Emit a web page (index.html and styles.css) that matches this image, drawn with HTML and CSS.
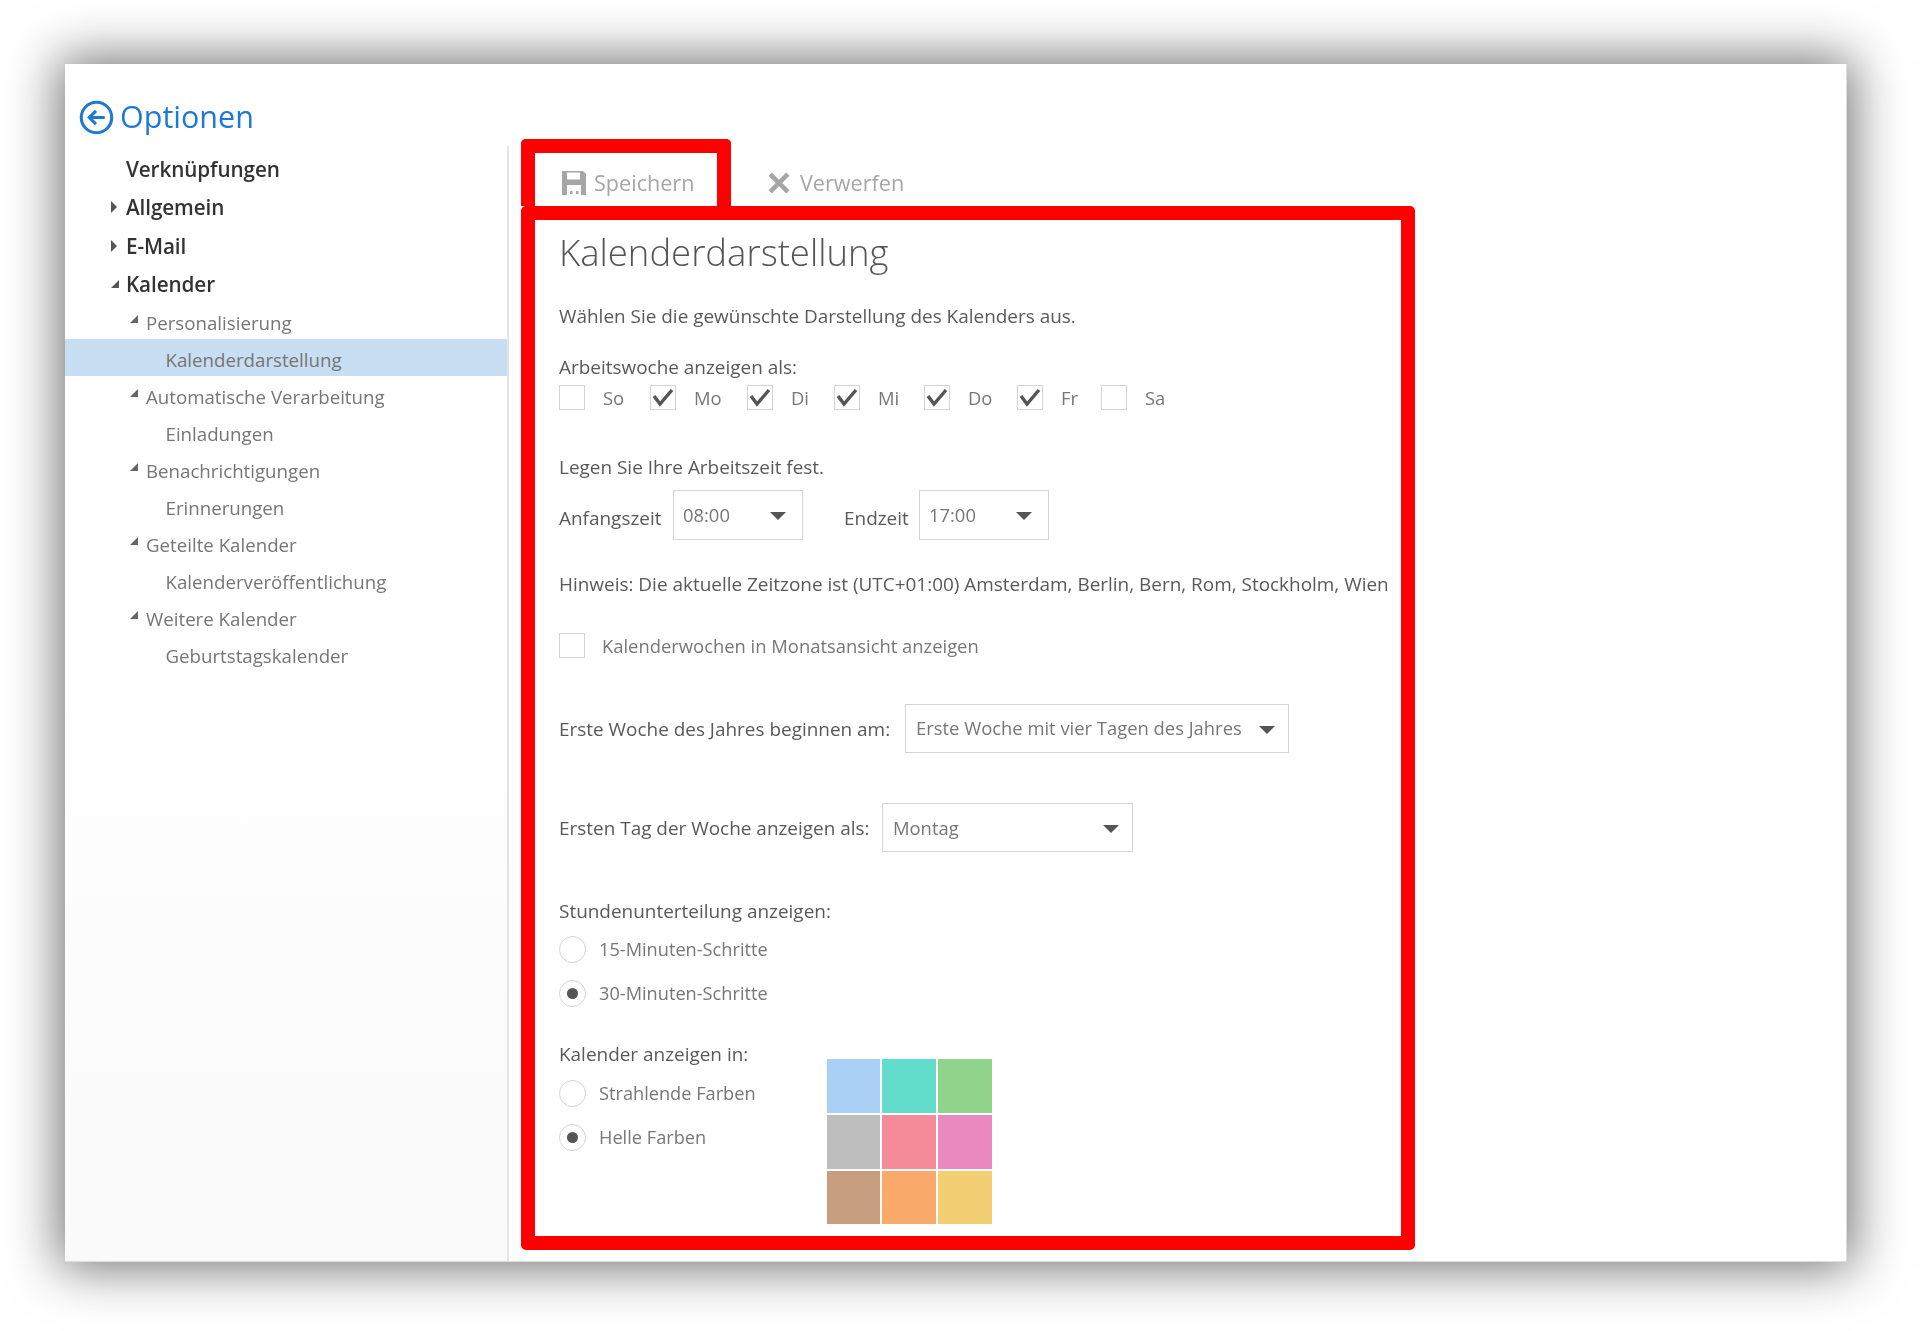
FILE: index.html
```html
<!DOCTYPE html>
<html lang="de">
<head>
<meta charset="utf-8">
<title>Optionen – Kalenderdarstellung</title>
<link rel="stylesheet" href="styles.css">
</head>
<body>
<div class="window">
  <aside class="side">
    <header class="side-head">
      <svg class="back" viewBox="0 0 34 34"><circle cx="17" cy="17" r="14.8" fill="none" stroke="#1f78d6" stroke-width="3"/><path d="M25 17H10M16.5 10.5L10 17l6.500 6.500" fill="none" stroke="#1f78d6" stroke-width="3"/></svg>
      <span class="side-title">Optionen</span>
    </header>
    <nav class="tree">
      <div class="l1">Verknüpfungen</div>
      <div class="l1"><svg class="tw" viewBox="0 0 10 14"><path d="M2 1l6 6-6 6z"/></svg>Allgemein</div>
      <div class="l1"><svg class="tw" viewBox="0 0 10 14"><path d="M2 1l6 6-6 6z"/></svg>E-Mail</div>
      <div class="l1"><svg class="tw tw-open" viewBox="0 0 10 14"><path d="M9 3v8H1z"/></svg>Kalender</div>
      <div class="l2"><svg class="tw" viewBox="0 0 10 14"><path d="M9 3v8H1z"/></svg>Personalisierung</div>
      <div class="l3 sel">Kalenderdarstellung</div>
      <div class="l2"><svg class="tw" viewBox="0 0 10 14"><path d="M9 3v8H1z"/></svg>Automatische Verarbeitung</div>
      <div class="l3">Einladungen</div>
      <div class="l2"><svg class="tw" viewBox="0 0 10 14"><path d="M9 3v8H1z"/></svg>Benachrichtigungen</div>
      <div class="l3">Erinnerungen</div>
      <div class="l2"><svg class="tw" viewBox="0 0 10 14"><path d="M9 3v8H1z"/></svg>Geteilte Kalender</div>
      <div class="l3">Kalenderveröffentlichung</div>
      <div class="l2"><svg class="tw" viewBox="0 0 10 14"><path d="M9 3v8H1z"/></svg>Weitere Kalender</div>
      <div class="l3">Geburtstagskalender</div>
    </nav>
  </aside>
  <main class="main">
    <div class="toolbar">
      <div class="tab">
        <svg class="ico-save" viewBox="0 0 24 24"><path fill-rule="evenodd" d="M0 0h21l3 3v21H0zM5 1.500v7h13v-7zM5 14v10h14V14zM8 20h2.500v3H8zM14 20h2.500v3H14z"/></svg>
        <span>Speichern</span>
      </div>
      <div class="discard">
        <svg class="ico-x" viewBox="0 0 20 20"><path d="M2 2l16 16M18 2L2 18" fill="none" stroke="#a6a6a6" stroke-width="4.200"/></svg>
        <span>Verwerfen</span>
      </div>
    </div>
    <section class="panel">
      <h1 class="title">Kalenderdarstellung</h1>
      <p class="line intro">Wählen Sie die gewünschte Darstellung des Kalenders aus.</p>
      <p class="line week-head">Arbeitswoche anzeigen als:</p>
      <div class="week">
        <div class="day"><span class="cb"></span><span>So</span></div>
        <div class="day"><span class="cb"><svg viewBox="0 0 24 23"><path d="M3 10l6 8 12-14"/></svg></span><span>Mo</span></div>
        <div class="day"><span class="cb"><svg viewBox="0 0 24 23"><path d="M3 10l6 8 12-14"/></svg></span><span>Di</span></div>
        <div class="day"><span class="cb"><svg viewBox="0 0 24 23"><path d="M3 10l6 8 12-14"/></svg></span><span>Mi</span></div>
        <div class="day"><span class="cb"><svg viewBox="0 0 24 23"><path d="M3 10l6 8 12-14"/></svg></span><span>Do</span></div>
        <div class="day"><span class="cb"><svg viewBox="0 0 24 23"><path d="M3 10l6 8 12-14"/></svg></span><span>Fr</span></div>
        <div class="day"><span class="cb"></span><span>Sa</span></div>
      </div>
      <p class="line hours-head">Legen Sie Ihre Arbeitszeit fest.</p>
      <div class="hours">
        <span class="lbl lbl-start">Anfangszeit</span>
        <div class="select sel-time"><span class="val">08:00</span><i class="caret"></i></div>
        <span class="lbl lbl-end">Endzeit</span>
        <div class="select sel-time"><span class="val">17:00</span><i class="caret"></i></div>
      </div>
      <p class="line hint">Hinweis: Die aktuelle Zeitzone ist (UTC+01:00) Amsterdam, Berlin, Bern, Rom, Stockholm, Wien</p>
      <div class="kw"><span class="cb"></span><span>Kalenderwochen in Monatsansicht anzeigen</span></div>
      <div class="pick pick-first">
        <span class="lbl lbl-first">Erste Woche des Jahres beginnen am:</span>
        <div class="select sel-first"><span class="val">Erste Woche mit vier Tagen des Jahres</span><i class="caret"></i></div>
      </div>
      <div class="pick pick-day">
        <span class="lbl lbl-day">Ersten Tag der Woche anzeigen als:</span>
        <div class="select sel-day"><span class="val">Montag</span><i class="caret"></i></div>
      </div>
      <p class="line steps-head">Stundenunterteilung anzeigen:</p>
      <div class="radio radio-a"><span class="rb"></span><span>15-Minuten-Schritte</span></div>
      <div class="radio radio-b"><span class="rb on"></span><span>30-Minuten-Schritte</span></div>
      <div class="colors">
        <div class="colors-left">
          <p class="line">Kalender anzeigen in:</p>
          <div class="radio radio-a"><span class="rb"></span><span>Strahlende Farben</span></div>
          <div class="radio radio-b"><span class="rb on"></span><span>Helle Farben</span></div>
        </div>
        <div class="swatches">
          <i class="c1"></i><i class="c2"></i><i class="c3"></i>
          <i class="c4"></i><i class="c5"></i><i class="c6"></i>
          <i class="c7"></i><i class="c8"></i><i class="c9"></i>
        </div>
      </div>
    </section>
  </main>
</div>
</body>
</html>
```
FILE: styles.css
```css
* { box-sizing: border-box; }
html, body { margin: 0; height: 100%; }
body {
  height: 1331px;
  padding: 64px 73px 69px 65px;
  background: #fff;
  overflow: hidden;
  font-family: "Open Sans", "Liberation Sans", sans-serif;
  font-size: 18.950px;
  color: #595959;
}
.window {
  height: 100%;
  display: flex;
  background: #fff;
  box-shadow: 0 0 48px 6px rgba(0,0,0,.55);
  border-right: 1px solid #ddd;
  border-bottom: 1px solid #ddd;
  filter: blur(.45px);
}
.side { width: 444px; display: flex; flex-direction: column; }
.side-head { height: 82px; padding: 36px 0 0 14px; display: flex; align-items: flex-start; gap: 6px; }
.back { width: 35px; height: 35px; flex: none; }
.side-title { font-size: 30.500px; line-height: 32px; color: #1f78d6; }
.tree { flex: 1; padding-top: 5px; border-right: 2px solid #e4e4e4; background: linear-gradient(#fff 40%, #fafafa); }
.l1 { height: 38.4px; line-height: 37.600px; padding-left: 61px; font-size: 20.700px; font-weight: 600; color: #333; position: relative; letter-spacing: -.1px; }
.l2, .l3 { height: 37px; padding-top: 3.5px; line-height: 33px; font-size: 18.700px; color: #767676; position: relative; }
.l1 + .l2 { margin-top: -2.500px; }
.l2 { padding-left: 81px; }
.l3 { padding-left: 100.500px; }
.sel { background: #c7def3; }
.tw { position: absolute; width: 10px; height: 14px; fill: #555; }
.l1 .tw { top: 11px; left: 44px; }
.l1 .tw-open { left: 45px; }
.l2 .tw { top: 10px; left: 63.500px; fill: #666; }
.main { flex: 1; padding: 75px 0 0 12px; }
.toolbar { display: flex; height: 67px; align-items: flex-start; color: #a6a6a6; font-size: 21.600px; }
.tab { width: 210px; height: 67px; border: 14px solid #f00; border-bottom: 0; border-radius: 5px 5px 0 0; padding: 7px 0 0 27px; display: flex; align-items: center; gap: 8px; line-height: 28px; }
.ico-save { width: 24px; height: 24px; fill: #a6a6a6; flex: none; }
.discard { padding: 30px 0 0 37px; display: flex; align-items: center; gap: 10px; line-height: 28px; }
.ico-x { width: 22px; height: 22px; flex: none; }
.panel { width: 894px; height: 1044px; border: 14px solid #f00; border-radius: 5px; padding: 8px 0 0 24px; }
.title { margin: 0; font-size: 36.500px; line-height: 49px; font-weight: 300; color: #555; }
.line { margin: 0; line-height: 28px; }
.intro { margin-top: 25px; }
.week-head { margin-top: 23px; }
.week { display: flex; margin-top: 4px; height: 26px; line-height: 25px; font-size: 18.400px; color: #777; }
.day { display: flex; gap: 18px; }
.day:nth-child(1) { width: 91px; }
.day:nth-child(2) { width: 97px; }
.day:nth-child(3) { width: 87px; }
.day:nth-child(4) { width: 90px; }
.day:nth-child(5) { width: 93px; }
.day:nth-child(6) { width: 84px; }
.cb { width: 26px; height: 25px; border: 1px solid #d4d4d4; flex: none; display: block; }
.cb svg { display: block; width: 24px; height: 23px; fill: none; stroke: #555; stroke-width: 3.4; }
.hours-head { margin-top: 42px; }
.hours { display: flex; margin-top: 8px; height: 50px; }
.lbl { line-height: 28px; flex: none; }
.hours .lbl { padding-top: 15px; }
.lbl-start { width: 114px; }
.lbl-end { width: 75px; margin-left: 41px; }
.select { position: relative; border: 1px solid #d4d4d4; flex: none; font-size: 18.400px; color: #777; padding-left: 10px; line-height: 47px; }
.sel-time { width: 130px; height: 50px; margin-top: 1px; padding-left: 9px; }
.sel-first .val { position: relative; top: -1px; }
.caret { position: absolute; top: 50%; right: 16px; margin-top: -3px; border: 8.500px solid transparent; border-top-color: #555; border-bottom: 0; }
.hint { margin-top: 31px; }
.kw { display: flex; margin-top: 35px; gap: 17px; line-height: 25px; font-size: 18.400px; color: #777; }
.pick { display: flex; height: 49px; }
.pick .lbl { padding-top: 11px; }
.pick-first { margin-top: 46px; }
.pick-day { margin-top: 50px; }
.lbl-first { width: 346px; }
.lbl-day { width: 323px; }
.sel-first { width: 384px; }
.sel-day { width: 251px; }
.sel-first .caret, .sel-day .caret { right: 13px; }
.steps-head { margin-top: 45px; }
.radio { display: flex; gap: 13px; line-height: 27px; font-size: 18.200px; color: #777; }
.radio-a { margin-top: 11px; }
.radio-b { margin-top: 17px; }
.rb { width: 27px; height: 27px; border: 1px solid #d4d4d4; border-radius: 50%; flex: none; display: flex; align-items: center; justify-content: center; }
.rb.on::after { content: ""; width: 11px; height: 11px; border-radius: 50%; background: #555; }
.colors { display: flex; margin-top: 33px; }
.colors-left { width: 267.500px; }
.colors-left .radio-a { margin-top: 12px; }
.colors-left .radio-b { margin-top: 17px; }
.swatches { margin-top: 19px; display: grid; grid-template-columns: repeat(3, 53.8px); grid-auto-rows: 53.8px; gap: 2px; }
.swatches i { display: block; }
.c1 { background: #aad1f5; }
.c2 { background: #62dccb; }
.c3 { background: #90d38b; }
.c4 { background: #bebebe; }
.c5 { background: #f58a98; }
.c6 { background: #ea89c0; }
.c7 { background: #c89d80; }
.c8 { background: #f9a96a; }
.c9 { background: #f3ce72; }
```
